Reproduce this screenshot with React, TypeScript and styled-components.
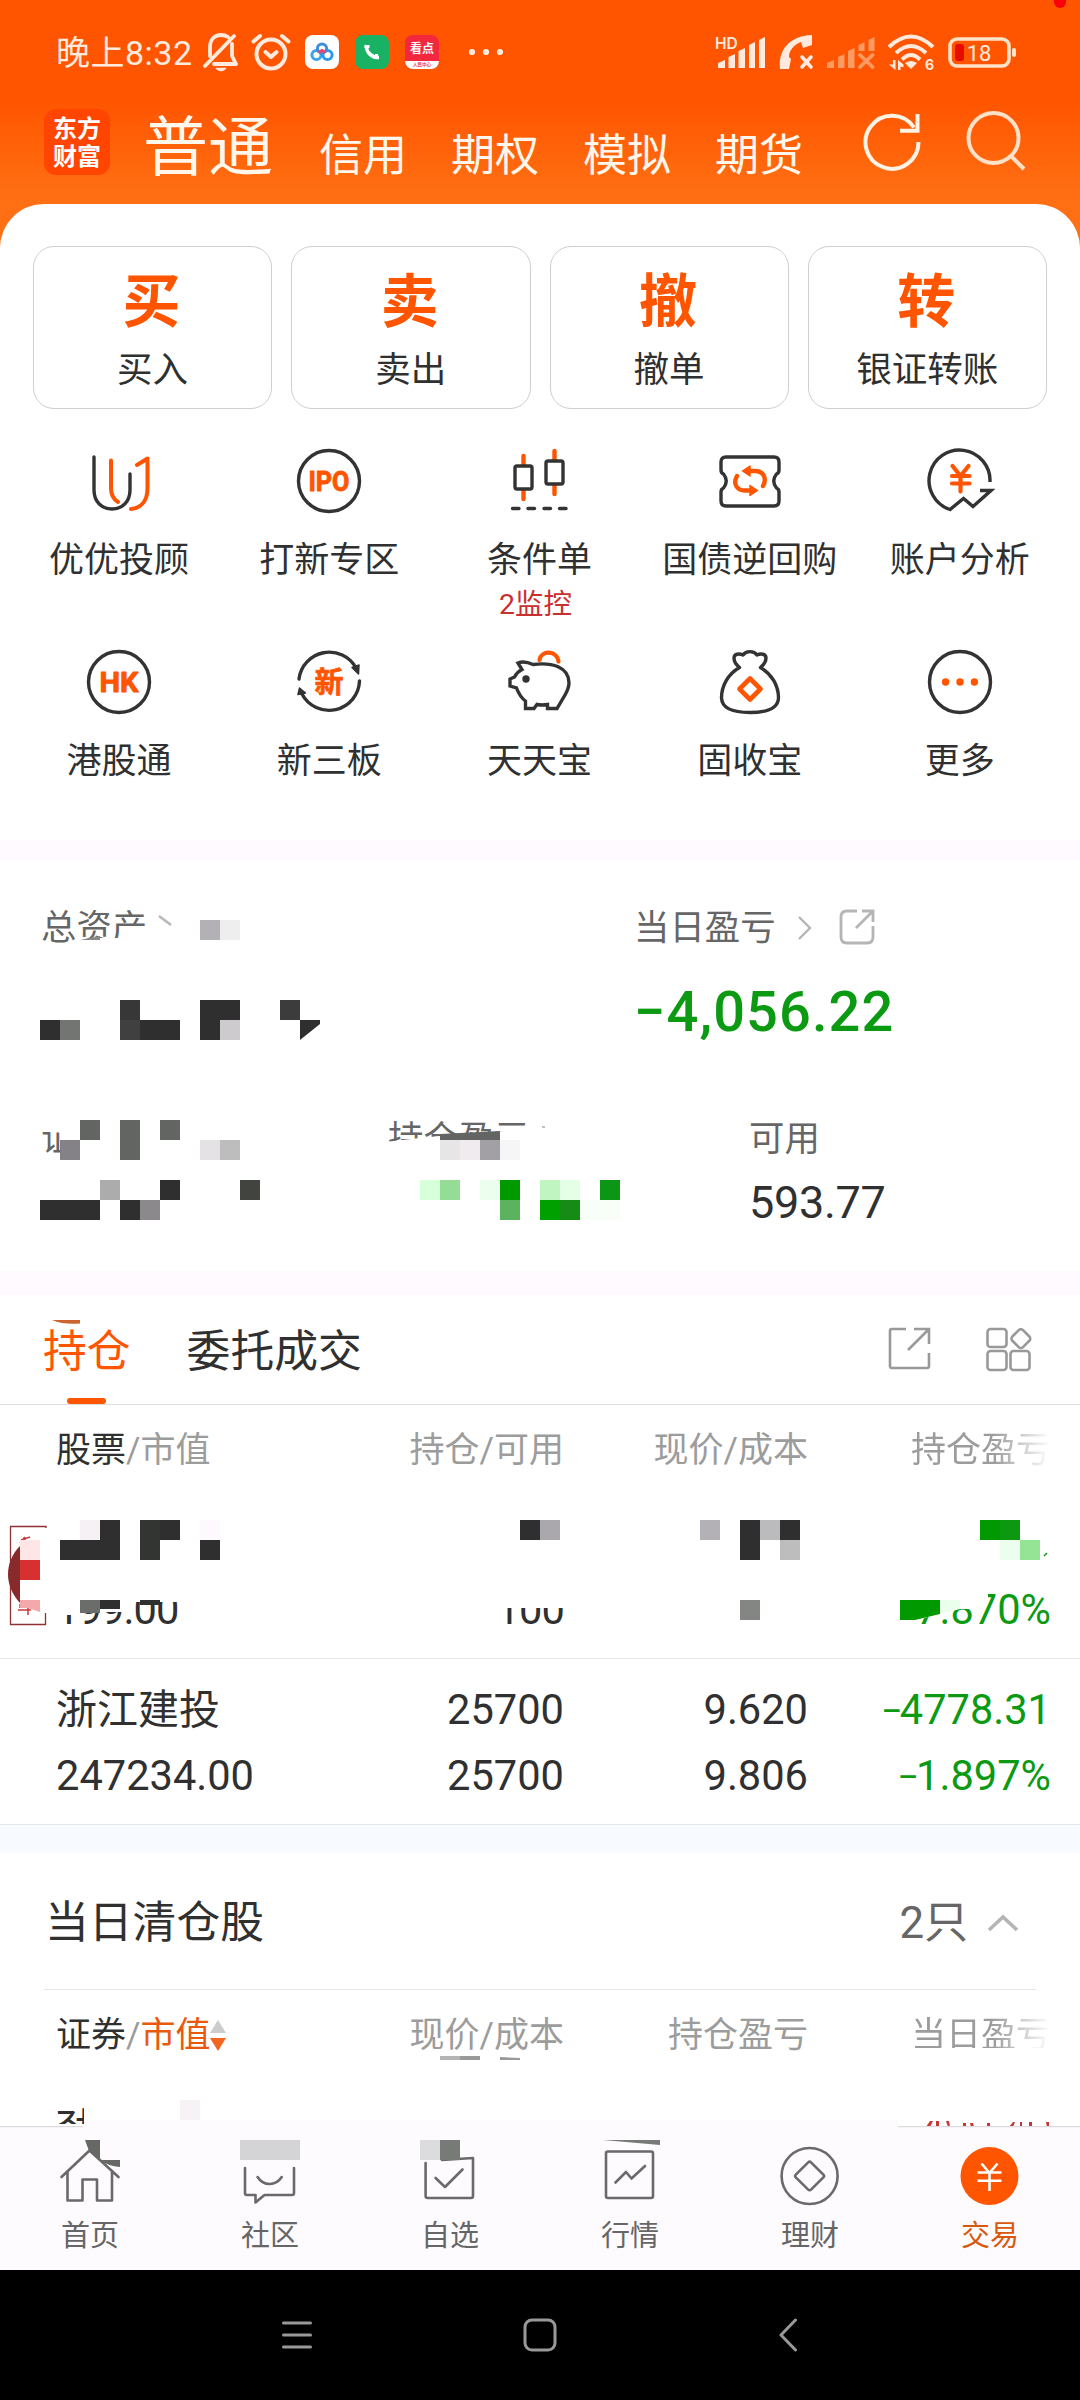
import React from "react";
import styled, { createGlobalStyle, css } from "styled-components";

const ORANGE = "#ff5500";
const INK = "#303030";
const GREEN = "#0b9a12";

const GlobalStyle = createGlobalStyle`
  body { margin: 0; background: #000; }
  * { box-sizing: border-box; }
  svg { display: block; flex: none; }
`;

const Screen = styled.main`
  width: 1080px;
  height: 2400px;
  overflow: hidden;
  display: flex;
  flex-direction: column;
  background: #fff;
  color: ${INK};
  font-family: Roboto, "Noto Sans CJK SC", sans-serif;
  white-space: nowrap;
`;

/* ---------- header ---------- */
const Header = styled.header`
  height: 254px;
  flex: none;
  background: linear-gradient(#ff5500 0, #ff5500 100px, #ff6e12 190px, #ff7014 254px);
`;

const StatusBar = styled.div`
  position: relative;
  height: 104px;
  padding: 0 63px 0 56px;
  display: flex;
  align-items: center;
  justify-content: space-between;
  color: #ffeadd;
`;

const StatusGroup = styled.div<{ $gap: number }>`
  display: flex;
  align-items: center;
  gap: ${(p) => p.$gap}px;
`;

const Clock = styled.span`
  width: 131px;
  padding-top: 2px;
  font-size: 34px;
  line-height: 40px;
  letter-spacing: 0.5px;
`;

const AlertIcons = styled.span`
  display: flex;
  gap: 12px;
  margin-right: -2px;
`;

const MoreDots = styled.svg`
  margin-left: 12px;
`;

const AppTile = styled.span<{ $bg: string }>`
  width: 34px;
  height: 34px;
  border-radius: 8px;
  overflow: hidden;
  background: ${(p) => p.$bg};
  display: flex;
  flex-direction: column;
  align-items: center;
  justify-content: center;
`;

const NewsTile = styled(AppTile)`
  justify-content: space-between;
  color: #fff;
  font: 700 12px/26px "Noto Sans CJK SC", sans-serif;
  small {
    width: 100%;
    height: 8px;
    background: #fff;
    color: #e8334a;
    font-size: 4.5px;
    line-height: 7px;
    text-align: center;
  }
`;

const CameraDot = styled.i`
  position: absolute;
  top: -6px;
  right: 14px;
  width: 12px;
  height: 14px;
  border-radius: 6px;
  background: #fb0007;
`;

const TopTabs = styled.nav`
  height: 100px;
  padding: 0 54px 0 44px;
  display: flex;
  align-items: center;
  color: #fff6ec;
`;

const Logo = styled.div`
  width: 66px;
  height: 66px;
  margin: 0 33px 24px 0;
  padding-top: 4px;
  border-radius: 12px;
  background: #ff4500;
  display: flex;
  flex-direction: column;
  align-items: center;
  color: #fff;
  font: 700 24px/28px "Noto Sans CJK SC", sans-serif;
`;

const ActiveTab = styled.span`
  width: 176px;
  margin-bottom: 12px;
  font-size: 65px;
  line-height: 70px;
`;

const TopTab = styled.span`
  width: 132px;
  padding-top: 4px;
  font-size: 44px;
  line-height: 50px;
`;

const TopIcons = styled.div`
  display: flex;
  gap: 44px;
  margin: 0 0 26px auto;
`;

/* ---------- shortcuts ---------- */
const QuickPanel = styled.section`
  height: 636px;
  flex: none;
  margin-top: -50px;
  padding: 42px 0 0;
  border-radius: 44px 44px 0 0;
  background: #fff;
`;

const Actions = styled.div`
  display: flex;
  gap: 19px;
  padding: 0 33px;
`;

const ActionCard = styled.div`
  flex: 1;
  height: 163px;
  border: 1px solid #cfcfcf;
  border-radius: 21px;
  display: flex;
  flex-direction: column;
  align-items: center;
  strong {
    margin: 22px 2px 0 0;
    color: ${ORANGE};
    font-size: 58px;
    line-height: 66px;
    font-weight: 700;
  }
  span {
    margin-top: 14px;
    font-size: 35.5px;
    line-height: 42px;
  }
`;

const Shortcuts = styled.div`
  margin: 37px 14px 0;
  display: grid;
  grid-template-columns: repeat(5, 210.2px);
  grid-auto-rows: 201px;
`;

const Shortcut = styled.div`
  display: flex;
  flex-direction: column;
  align-items: center;
  font-size: 35px;
  line-height: 40px;
  span { margin-top: 25px; }
  em {
    margin: 10px 0 0 -8px;
    color: #c9302f;
    font-size: 28.5px;
    line-height: 28px;
    font-style: normal;
  }
`;

const Band = styled.div<{ $h: number; $bg: string }>`
  flex: none;
  height: ${(p) => p.$h}px;
  background: ${(p) => p.$bg};
`;

/* ---------- assets ---------- */
const Block = styled.section<{ $h: number }>`
  position: relative;
  flex: none;
  height: ${(p) => p.$h}px;
`;

const Mosaic = styled.svg`
  position: absolute;
  left: 0;
  bottom: 0;
  pointer-events: none;
`;

const AssetTop = styled.div`
  padding: 48px 0 0 41px;
  display: grid;
  grid-template-columns: 593px 1fr;
  height: 259px;
  align-content: start;
`;

const AssetBottom = styled.div`
  padding-left: 41px;
  display: grid;
  grid-template-columns: 347px 361px 1fr;
`;

const Label = styled.div`
  display: flex;
  align-items: center;
  height: 40px;
  color: #666;
  font-size: 35.4px;
  line-height: 40px;
`;

const Chevron = styled.svg`
  margin-left: 21px;
`;

const ShareIcon = styled.svg`
  margin: -3px 0 0 26px;
`;

const DayProfit = styled.div`
  margin-top: 34px;
  color: ${GREEN};
  font-size: 56px;
  line-height: 60px;
  font-weight: 500;
  letter-spacing: 1.1px;
`;

const Available = styled.div`
  margin-top: 19px;
  font-size: 45px;
  line-height: 50px;
  letter-spacing: -0.3px;
`;

/* ---------- holdings ---------- */
const TabBar = styled.div`
  height: 110px;
  padding: 0 48px 0 43px;
  border-bottom: 1px solid #dedede;
  display: flex;
  align-items: flex-start;
`;

const HoldTab = styled.span<{ $active?: boolean }>`
  height: 109px;
  margin-right: 56px;
  padding-top: 31px;
  font-size: 43.8px;
  line-height: 52px;
  display: flex;
  flex-direction: column;
  align-items: center;
  justify-content: space-between;
  ${(p) =>
    p.$active &&
    css`
      color: ${ORANGE};
      &::after {
        content: "";
        width: 39px;
        height: 6px;
        border-radius: 3px;
        background: ${ORANGE};
      }
    `}
`;

const TabTools = styled.div`
  margin: 32px 0 0 auto;
  display: flex;
  gap: 55px;
`;

const columns = css`
  display: grid;
  grid-template-columns: 222px 286px 244px 243px;
  padding: 0 29px 0 56px;
  > * { text-align: right; }
  > :first-child { text-align: left; }
`;

const ColumnHead = styled.div`
  ${columns}
  height: 88px;
  padding-top: 4px;
  align-items: center;
  color: #9c9c9c;
  font-size: 35px;
  line-height: 40px;
  b { font-weight: 400; color: ${INK}; }
  i { font-style: normal; color: #e8590c; }
  > :last-child {
    -webkit-mask-image: linear-gradient(90deg, #000 185px, transparent 243px);
    mask-image: linear-gradient(90deg, #000 185px, transparent 243px);
  }
`;

const SortableHead = styled.div`
  display: flex;
  align-items: center;
`;

const HoldRow = styled.div`
  ${columns}
  height: 166px;
  padding-top: 18px;
  border-bottom: 1px solid #e6e6e6;
  font-size: 41.6px;
  line-height: 66px;
`;

const Cell = styled.div<{ $color?: string; $tight?: boolean }>`
  color: ${(p) => p.$color ?? INK};
  letter-spacing: ${(p) => (p.$tight ? "-0.9px" : "0")};
  div { height: 66px; }
`;

const StockName = styled.div`
  font-size: 41px;
`;

const Minus = styled.span`
  margin-right: -3px;
  font-size: 38px;
`;

/* ---------- cleared ---------- */
const ClearedTitle = styled.div`
  height: 137px;
  margin: 0 44px;
  padding: 4px 17px 0 1px;
  border-bottom: 1px solid #e6e6e6;
  display: flex;
  align-items: center;
  font-size: 43.8px;
  line-height: 50px;
  span { margin-left: auto; margin-right: 19px; color: #666; }
`;

const PeekRow = styled.div`
  height: 46px;
  padding: 31px 0 0 55px;
  overflow: hidden;
  font-size: 41.6px;
  line-height: 42px;
`;

/* ---------- bottom ---------- */
const BottomNav = styled.nav`
  position: relative;
  flex: none;
  height: 144px;
  padding-top: 15px;
  background: #fefbff;
  display: grid;
  grid-template-columns: repeat(6, 180px);
`;

const NavItem = styled.div<{ $active?: boolean }>`
  display: flex;
  flex-direction: column;
  align-items: center;
  gap: 10px;
  color: ${(p) => (p.$active ? "#d9580e" : "#666")};
  font-size: 29px;
  line-height: 30px;
`;

const SystemBar = styled.footer`
  flex: 1;
  background: #000;
  display: grid;
  grid-template-columns: 32px 34px 20px;
  align-items: center;
  column-gap: 216px;
  padding-left: 281px;
  > :nth-child(2) { margin-left: -6px; }
  > :nth-child(3) { margin-left: -1px; }
`;

/* ---------- drawings ---------- */
const Glyph = ({ children, color = "#333", w = 3.4 }: { children: React.ReactNode; color?: string; w?: number }) => (
  <svg width="70" height="70" viewBox="0 0 70 70" fill="none" stroke={color} strokeWidth={w} strokeLinecap="round" strokeLinejoin="round">
    {children}
  </svg>
);

const glyphText = { fill: ORANGE, stroke: ORANGE, strokeWidth: 0.9, textAnchor: "middle" as const, fontWeight: 700 };

const shortcuts: { name: string; note?: string; icon: React.ReactNode }[] = [
  {
    name: "优优投顾",
    icon: (
      <>
        <path d="M10 11V44C10 56 18 63 28 63S46 56 46 44V28" />
        <path d="M27 14.500V42C27 48 29 53 34 56M53 19 63.500 12.500V42C63.500 55 57 62 47 63" stroke={ORANGE} strokeWidth="4" />
      </>
    ),
  },
  {
    name: "打新专区",
    icon: (
      <>
        <circle cx="35" cy="35" r="30.500" />
        <text x="35" y="45" fontFamily="Roboto" fontSize="28" textLength="41" lengthAdjust="spacingAndGlyphs" {...glyphText}>IPO</text>
      </>
    ),
  },
  {
    name: "条件单",
    note: "2监控",
    icon: (
      <>
        <path d="M19.500 10V19M19.500 44V53M50.500 5V14M50.500 39V48" stroke={ORANGE} strokeWidth="4.400" />
        <rect x="11" y="20" width="17" height="23" rx="2" />
        <rect x="42" y="15" width="17" height="23" rx="2" />
        <path d="M8.500 62.500H15M24 62.500H30.500M40 62.500H46.500M55.500 62.500H62" />
      </>
    ),
  },
  {
    name: "国债逆回购",
    icon: (
      <>
        <path d="M11 11H59Q64 11 64 16V24Q64 27 61.500 28Q56 35 61.500 42Q64 43 64 46V55Q64 60 59 60H11Q6 60 6 55V46Q6 43 8.500 42Q14 35 8.500 28Q6 27 6 24V16Q6 11 11 11Z" />
        <path d="M33 25H40C49 25 52 33 48 40M37 44.500H30C21 44.500 18 37 22 30" stroke={ORANGE} strokeWidth="4.400" />
        <path d="M27.500 25 35 20V30ZM42.500 44.500 35 39.500V49.500Z" fill={ORANGE} stroke={ORANGE} strokeWidth="1.500" />
      </>
    ),
  },
  {
    name: "账户分析",
    icon: (
      <>
        <path d="M65 36A30.500 30.500 0 1 0 25 63.500L38.500 52.500 48 60.500 66 44.500H55" strokeLinecap="butt" strokeLinejoin="miter" />
        <path d="M27.500 20 35.500 30 43.500 20M27 30H44.500M27 37.500H44.500M35.500 30V45.500" stroke={ORANGE} strokeWidth="4.200" />
      </>
    ),
  },
  {
    name: "港股通",
    icon: (
      <>
        <circle cx="35" cy="35" r="30.500" />
        <text x="35" y="45" fontFamily="Roboto" fontSize="28" textLength="39" lengthAdjust="spacingAndGlyphs" {...glyphText}>HK</text>
      </>
    ),
  },
  {
    name: "新三板",
    icon: (
      <>
        <path d="M5 32A30.500 30.500 0 0 1 62 21M65.500 34A30.500 30.500 0 0 1 8 47" />
        <path d="M58 20.500 65 18 64.500 27ZM4 47.500 5.500 41 11.500 46Z" fill="#333" strokeWidth="1.500" />
        <text x="35" y="45.500" fontFamily="Noto Sans CJK SC" fontSize="29" {...glyphText} strokeWidth={0.7}>新</text>
      </>
    ),
  },
  {
    name: "天天宝",
    icon: (
      <>
        <path d="M14 16Q20 13.500 29 17.500C48 15 65 20 65 36Q65 41 61 48L53 61.500H43.500V57.500Q38 58.500 33 57.500L30 61.500H21.500V54Q16 50 12.500 41L6 39V32L10.500 30Q13 25 18 22.500Z" strokeLinejoin="miter" />
        <circle cx="22" cy="32" r="2" fill="#333" />
        <path d="M35.500 13C37 3 53 3 54.500 14.500" stroke={ORANGE} strokeWidth="4.200" />
      </>
    ),
  },
  {
    name: "固收宝",
    icon: (
      <>
        <path d="M24.500 20.500C13 27 6.500 39 6.500 51C7 62 20 65.500 35 65.500S63 62 63.500 51C63.500 39 57 27 45.500 20.500Q51 16 51 11C51 7 46 6 42 8C39 3.500 31 3.500 28 8C24 6 19 7 19 11Q19 16 24.500 20.500" />
        <path d="M35 31.500 45.500 42 35 52.500 24.500 42Z" stroke={ORANGE} strokeWidth="4.600" />
      </>
    ),
  },
  {
    name: "更多",
    icon: (
      <>
        <circle cx="35" cy="35" r="30.500" />
        <g fill={ORANGE} stroke="none">
          <circle cx="20.600" cy="35" r="3.700" />
          <circle cx="35" cy="35" r="3.700" />
          <circle cx="49.400" cy="35" r="3.700" />
        </g>
      </>
    ),
  },
];

const navItems: { name: string; active?: boolean; icon: React.ReactNode }[] = [
  { name: "首页", icon: <path d="M6.500 36 34.500 9.500 63.500 36M12.500 31V59.500H27.500V38.500H42V59.500H57V31" /> },
  { name: "社区", icon: <path d="M10 27V52Q10 54 12 54H20.500V61.500L29.500 54H57Q59 54 59 52V27M22.600 36Q27 43 34.600 43T46.700 36" /> },
  { name: "自选", icon: <path d="M10.600 22V55Q10.600 57 12.600 57H56Q58 57 58 55V17L27 19M20.600 37 30 46 47.500 28.500" /> },
  {
    name: "行情",
    icon: (
      <>
        <rect x="11" y="10.500" width="47" height="46.500" rx="2" />
        <path d="M20.500 41.500 31 31 36.500 37.500 50 25" />
      </>
    ),
  },
  {
    name: "理财",
    icon: (
      <>
        <circle cx="34.600" cy="35" r="28" />
        <path d="M33.200 21.400Q34.600 20 36 21.400L48.400 33.600Q49.800 35 48.400 36.400L36 48.600Q34.600 50 33.200 48.600L20.800 36.400Q19.400 35 20.800 33.600Z" />
      </>
    ),
  },
  {
    name: "交易",
    active: true,
    icon: (
      <>
        <circle cx="34.500" cy="35" r="29" fill={ORANGE} stroke="none" />
        <path d="M26.500 22.500 34.500 32 42.500 22.500M22.500 31.500H46.500M22.500 39.800H46.500M34.500 32V50" stroke="#fff" strokeWidth="2.600" strokeLinecap="butt" />
      </>
    ),
  },
];

type Tile = [number, number, string, number?, number?];
const Tiles = ({ list }: { list: Tile[] }) => (
  <g shapeRendering="crispEdges">
    {list.map(([x, y, fill, w = 20, h = 20], i) => (
      <rect key={i} x={x} y={y} width={w} height={h} fill={fill} />
    ))}
  </g>
);

const assetTiles: Tile[] = [
  [78, 940, "#fff", 22, 10], [100, 938, "#fff", 60, 12],
  [200, 920, "#b3b1b5"], [220, 920, "#eee"],
  [120, 1000, "#373737"], [200, 1000, "#2f2f2f", 40], [280, 1000, "#3b3c3b"],
  [40, 1020, "#2f2f2f"], [60, 1020, "#737573"], [120, 1020, "#404040"], [140, 1020, "#2f2f2f", 40], [200, 1020, "#2f2f2f"], [220, 1020, "#cdcbce"],
  [40, 1115, "#fff", 150, 17], [63, 1115, "#fff", 130, 45], [40, 1153, "#fff", 40, 9],
  [80, 1120, "#636562"], [120, 1120, "#636562", 20, 40], [160, 1120, "#636562"],
  [60, 1140, "#848286"], [200, 1140, "#e5e2e6"], [220, 1140, "#bdbdbd"],
  [100, 1180, "#acacac"], [160, 1180, "#2f2f2f"], [240, 1180, "#424440"],
  [40, 1200, "#2f2f2f", 60], [120, 1200, "#2f2f2f"], [140, 1200, "#8b898c"],
];
const assetTilesRight: Tile[] = [
  [440, 1140, "#e6e6e6"], [460, 1140, "#f0ebef"], [480, 1140, "#a2a0a4"], [500, 1140, "#f6f6f6"],
  [420, 1180, "#d7ffd9"], [440, 1180, "#95dd96"], [480, 1180, "#ecffee"], [500, 1180, "#009900"],
  [540, 1180, "#c0f4c1"], [560, 1180, "#e5ffe7"], [600, 1180, "#0b9715"],
  [500, 1200, "#5cb35f"], [540, 1200, "#00a000"], [560, 1200, "#168b16"], [580, 1200, "#f8fff8", 40],
];
const holdTiles: Tile[] = [
  [80, 1520, "#f5f1f5"], [100, 1520, "#2f2f2f"], [140, 1520, "#323531"], [160, 1520, "#2f2f2f"], [200, 1520, "#fdf9ff"],
  [60, 1540, "#2f2f2f", 60], [140, 1540, "#323531"], [200, 1540, "#2f2f2f"],
  [55, 1588, "#fff", 21, 27], [76, 1588, "#fff", 50, 24], [120, 1588, "#fff", 65, 14],
  [80, 1600, "#6b6d6a", 20, 13], [100, 1600, "#2f2f2f", 20, 9], [140, 1600, "#2f2f2f", 20, 5],
  [495, 1588, "#fff", 75, 20], [520, 1520, "#2f2f2f"], [540, 1520, "#aaa8ac"],
  [700, 1520, "#b3b1b5"], [740, 1520, "#2f2f2f", 20, 40], [760, 1520, "#bbbabc"], [780, 1520, "#2f2f2f"], [780, 1540, "#bdbdbd"], [740, 1600, "#848684"],
  [980, 1520, "#009900"], [1000, 1520, "#0c9810"], [1000, 1540, "#ecffee"], [1020, 1540, "#95e496"],
  [880, 1588, "#fff", 92, 21], [968, 1588, "#fff", 20, 16],
];

const stock = {
  name: "浙江建投", value: "247234.00", held: "25700", free: "25700", price: "9.620", cost: "9.806", profit: "4778.31", rate: "1.897%",
};

export default function App() {
  return (
    <Screen>
      <GlobalStyle />
      <Header>
        <StatusBar>
          <StatusGroup $gap={16}>
            <Clock>晚上8:32</Clock>
            <AlertIcons>
              <svg width="36" height="40" viewBox="0 0 36 40" fill="none" stroke="#ffeadd" strokeWidth="3.800" strokeLinecap="round" strokeLinejoin="round">
                <path d="M7 24V15C7 7 12 3 18 3Q22 3 25 5M29 12V24L33 32H11M2 34 31 4" />
                <path d="M13.500 36.500H22.500Q18 40.500 13.500 36.500Z" fill="#ffeadd" strokeWidth="1.500" />
              </svg>
              <svg width="40" height="40" viewBox="0 0 40 40" fill="none" stroke="#ffeadd" strokeWidth="4" strokeLinecap="round" strokeLinejoin="round">
                <circle cx="20" cy="22" r="14.500" />
                <path d="M14.500 20 20 25 25.500 20M2.500 9.500 9 4M37.500 9.500 31 4" />
              </svg>
            </AlertIcons>
            <AppTile $bg="#fff">
              <svg width="24" height="20" viewBox="0 0 24 20" fill="none" strokeWidth="3">
                <circle cx="6.500" cy="13" r="4.600" stroke="#3aa3ea" />
                <circle cx="17.500" cy="13" r="4.600" stroke="#2b9be8" />
                <circle cx="12" cy="6.500" r="4.600" stroke="#3c8fdc" />
                <path d="M8.500 10.500 12 8.500 15.500 10.500" stroke="#e8486a" />
              </svg>
            </AppTile>
            <AppTile $bg="#19b264">
              <svg width="18" height="18" viewBox="0 0 18 18" fill="none" stroke="#fff" strokeWidth="3.600">
                <path d="M3.500 2C3 9 8 14.500 16 14.500" />
                <path d="M1.500 3.500H6.500M13.500 11V16" strokeWidth="3" />
              </svg>
            </AppTile>
            <NewsTile $bg="#f3283f">看点<small>人民中心</small></NewsTile>
            <MoreDots width="36" height="8" viewBox="0 0 36 8" fill="#ffeadd">
              <circle cx="5" cy="4" r="3.100" /><circle cx="19" cy="4" r="3.100" /><circle cx="33" cy="4" r="3.100" />
            </MoreDots>
          </StatusGroup>
          <StatusGroup $gap={13}>
            <svg width="51" height="36" viewBox="0 0 51 36" fill="#ffeadd">
              <text x="0" y="15" fontFamily="Inter" fontWeight="600" fontSize="15.500">HD</text>
              <path d="M3 34V29L10 26V34ZM13.500 34V23L20 20V34ZM23.500 34V17L30 14V34ZM34 34V11L40 8V34ZM44 34V6L50 3V34Z" />
            </svg>
            <svg width="35" height="36" viewBox="0 0 35 36" fill="#ffeadd" stroke="#ffeadd" strokeLinecap="round">
              <path d="M1 35C-1 15 11 2 33 1V11L24 14 22 8C14 11 10 17 10 23L12 25 10 35Z" stroke="none" />
              <path d="M23 23 32 33M32 23 23 33" fill="none" strokeWidth="3.600" />
            </svg>
            <svg width="48" height="34" viewBox="0 0 48 34" fill="#ff9a62">
              <path d="M0 33V28L7 25V33ZM11 33V22L17.500 19V33ZM21 33V16L27.500 13V33ZM31.500 16V10L37.500 7V16ZM41.500 16V5L47.500 2V16Z" />
              <path d="M33 20 45.500 32M45.500 20 33 32" stroke="#ff9a62" strokeWidth="3.800" strokeLinecap="round" />
            </svg>
            <svg width="47" height="37" viewBox="0 0 47 37" fill="none" stroke="#ffeadd" strokeWidth="4">
              <path d="M1 13Q23 -8 45 13M8 19Q23 5 38 19M14 25.500Q23 16.500 32 25.500" />
              <path d="M17 29Q23 25 29 29L23 35ZM7.500 26V36L1 30.500H5V26ZM10 36V26L15.500 30.500V33H12.500V36Z" fill="#ffeadd" stroke="none" />
              <text x="37" y="35.500" fontFamily="Inter" fontWeight="700" fontSize="14" fill="#ffeadd" stroke="none">6</text>
            </svg>
            <svg width="69" height="31" viewBox="0 0 69 31">
              <rect x="2" y="2" width="59" height="27" rx="7" fill="none" stroke="#ffe3c8" strokeWidth="3.600" />
              <rect x="7" y="7" width="9" height="17" rx="3" fill="#e60c00" />
              <rect x="64" y="11" width="4" height="9" rx="2" fill="#ffe3c8" />
              <text x="31" y="23.500" fontFamily="Roboto" fontSize="22" fill="#ffeadd" textAnchor="middle">18</text>
            </svg>
          </StatusGroup>
          <CameraDot />
        </StatusBar>
        <TopTabs>
          <Logo><span>东方</span><span>财富</span></Logo>
          <ActiveTab>普通</ActiveTab>
          {["信用", "期权", "模拟", "期货"].map((t) => <TopTab key={t}>{t}</TopTab>)}
          <TopIcons>
            <svg width="60" height="60" viewBox="0 0 60 60" fill="none" stroke="#fff3e6" strokeWidth="4">
              <path d="M56.500 31A26.500 26.500 0 1 1 52 16.500" />
              <path d="M38 19.800H55.500V3" />
            </svg>
            <svg width="60" height="60" viewBox="0 0 60 60" fill="none" stroke="#ffe0c8" strokeWidth="4">
              <circle cx="27.500" cy="27" r="25" />
              <path d="M45 45 58 58" />
            </svg>
          </TopIcons>
        </TopTabs>
      </Header>

      <QuickPanel>
        <Actions>
          {[["买", "买入"], ["卖", "卖出"], ["撤", "撤单"], ["转", "银证转账"]].map(([mark, name]) => (
            <ActionCard key={mark}><strong>{mark}</strong><span>{name}</span></ActionCard>
          ))}
        </Actions>
        <Shortcuts>
          {shortcuts.map((s) => (
            <Shortcut key={s.name}>
              <Glyph>{s.icon}</Glyph>
              <span>{s.name}</span>
              {s.note && <em>{s.note}</em>}
            </Shortcut>
          ))}
        </Shortcuts>
      </QuickPanel>
      <Band $h={20} $bg="#fefaff" />

      <Block $h={411}>
        <AssetTop>
          <Label>总资产</Label>
          <div>
            <Label>
              当日盈亏
              <Chevron width="16" height="26" viewBox="0 0 16 26" fill="none" stroke="#b5b5b5" strokeWidth="2.400"><path d="M2 2 13 13 2 24" /></Chevron>
              <ShareIcon width="36" height="36" viewBox="0 0 36 36" fill="none" stroke="#b5b5b5" strokeWidth="2.800">
                <path d="M18 2H8Q2 2 2 8V28Q2 34 8 34H28Q34 34 34 28V17M23 2H34V13M33 3 17 19" />
              </ShareIcon>
            </Label>
            <DayProfit>−4,056.22</DayProfit>
          </div>
        </AssetTop>
        <AssetBottom>
          <Label>证券市值</Label>
          <Label>持仓盈亏</Label>
          <div>
            <Label>可用</Label>
            <Available>593.77</Available>
          </div>
        </AssetBottom>
        <Mosaic width="1080" height="411" viewBox="0 860 1080 411">
          <Tiles list={assetTiles} />
          <path d="M80 940 100 936V940Z" fill="#888" />
          <path d="M159 916 171 925" stroke="#b8b8b8" strokeWidth="2.600" />
          <path d="M300 1020H320V1024L300 1040Z" fill="#2f2f2f" />
          <path d="M385 1142 420 1138 440 1136 530 1129V1162H385Z" fill="#fff" />
          <path d="M440 1134 500 1131V1140H440Z" fill="#636562" />
          <Tiles list={assetTilesRight} />
          <path d="M542 1127H545" stroke="#aaa" strokeWidth="1.500" />
        </Mosaic>
      </Block>
      <Band $h={24} $bg="#fefaff" />

      <Block $h={530}>
        <TabBar>
          <HoldTab $active>持仓</HoldTab>
          <HoldTab>委托成交</HoldTab>
          <TabTools>
            <svg width="43" height="43" viewBox="0 0 43 43" fill="none" stroke="#999" strokeWidth="2.600">
              <path d="M18 2H4Q2 2 2 4V39Q2 41 4 41H39Q41 41 41 39V26M26 2H41V17M40 3 20 23" />
            </svg>
            <svg width="46" height="46" viewBox="0 0 46 46" fill="none" stroke="#999" strokeWidth="2.600">
              <rect x="1.500" y="2" width="19" height="18" rx="3" />
              <rect x="1.500" y="24" width="19" height="19" rx="3" />
              <rect x="24.500" y="24" width="19" height="19" rx="3" />
              <rect x="27" y="4" width="15" height="15" rx="3" transform="rotate(45 34.500 12)" />
            </svg>
          </TabTools>
        </TabBar>
        <ColumnHead>
          <div><b>股票</b>/市值</div>
          <div>持仓/可用</div>
          <div>现价/成本</div>
          <div>持仓盈亏</div>
        </ColumnHead>
        <HoldRow>
          <Cell $tight><div />199.00</Cell>
          <Cell $tight><div />100</Cell>
          <Cell />
          <Cell $color={GREEN}><div /><Minus>−</Minus>7.870%</Cell>
        </HoldRow>
        <HoldRow>
          <Cell><StockName>{stock.name}</StockName>{stock.value}</Cell>
          <Cell><div>{stock.held}</div>{stock.free}</Cell>
          <Cell><div>{stock.price}</div>{stock.cost}</Cell>
          <Cell $color={GREEN}><div><Minus>−</Minus>{stock.profit}</div><Minus>−</Minus>{stock.rate}</Cell>
        </HoldRow>
        <Mosaic width="1080" height="530" viewBox="0 1295 1080 530">
          <path d="M52 1320H80V1323.500Q64 1325 52 1320Z" fill="#cc6430" />
          <Tiles list={holdTiles} />
          <path d="M880 1600H940V1614L920 1619V1626H880Z" fill="#fff" />
          <path d="M900 1600H940V1614L915 1620H900Z" fill="#009900" />
          <path d="M940 1600H960V1609L940 1614Z" fill="#ebffed" />
          <path d="M1044 1556 1047 1553" stroke={GREEN} strokeWidth="1.500" />
          <path d="M46 1528V1526.500H10.500V1624.500H45.500V1613" fill="none" stroke="#8f3034" strokeWidth="1.300" />
          <path d="M20 1546C4 1562 4 1586 20 1603Z" fill="#882a2b" />
          <path d="M20 1543 25 1537M21 1540 30 1537M24 1537 26 1542M18 1610H31M28 1606V1615M20 1604V1608" stroke="#c5383b" strokeWidth="1.500" fill="none" />
          <Tiles list={[[20, 1540, "#ffe6e6"], [20, 1560, "#d63031"], [20, 1600, "#f5a8ac", 20, 8]]} />
          <path d="M28 1608H40V1612Z" fill="#f5a8ac" />
        </Mosaic>
      </Block>
      <Band $h={28} $bg="#f7faff" />

      <Block $h={273}>
        <ClearedTitle>
          当日清仓股
          <span>2只</span>
          <svg width="32" height="18" viewBox="0 0 32 18" fill="none" stroke="#b5b5b5" strokeWidth="3.600"><path d="M2 16 16 3 30 16" /></svg>
        </ClearedTitle>
        <ColumnHead>
          <SortableHead>
            <b>证券</b>/<i>市值</i>
            <svg width="16" height="32" viewBox="0 0 16 32"><path d="M8 0 16 13H0Z" fill="#ccc" /><path d="M0 18H16L8 31Z" fill="#f26522" /></svg>
          </SortableHead>
          <div>现价/成本</div>
          <div>持仓盈亏</div>
          <div>当日盈亏</div>
        </ColumnHead>
        <PeekRow>劲</PeekRow>
        <Mosaic width="1080" height="273" viewBox="0 1853 1080 273">
          <Tiles list={[[440, 2056, "#b5b3b6", 20, 4], [460, 2056, "#999", 20, 4], [180, 2100, "#f6f2f6"], [910, 2048, "#fff", 145, 8], [84, 2105, "#fff", 20, 21], [84, 2120, "#fefbff", 814, 7]]} />
          <path d="M500 2057 520 2058V2060H500Z" fill="#999" />
          <path d="M926 2127 930 2121H933L930 2127ZM936 2121H939V2127H936ZM946 2121H949L950 2127H948ZM963 2123H966V2127H963ZM970 2123H973L974 2127H971ZM987 2123H990V2127H987ZM1009 2127 1013 2122H1015L1013 2127ZM1020 2122H1022V2127H1020ZM1029 2122H1032V2127H1029ZM1046 2122H1049V2127H1047Z" fill="#c93434" />
        </Mosaic>
      </Block>

      <BottomNav>
        {navItems.map((n) => (
          <NavItem key={n.name} $active={n.active}>
            <Glyph color="#6a6a6a" w={2.6}>{n.icon}</Glyph>
            {n.name}
          </NavItem>
        ))}
        <Mosaic width="1080" height="144" viewBox="0 2126 1080 144">
          <path d="M0 2126.500H83M898 2126.500H1080" stroke="#dcdcdf" strokeWidth="1.500" />
          <path d="M85 2140H100V2160L89 2151ZM100 2160H120V2167Q108 2166 100 2160Z" fill="#666863" />
          <Tiles list={[[240, 2140, "#d4d3d5", 60], [420, 2140, "#dcdbde"], [440, 2140, "#787a77"]]} />
          <path d="M603 2140H660V2145Z" fill="#787a77" />
        </Mosaic>
      </BottomNav>

      <SystemBar>
        <svg width="32" height="32" viewBox="0 0 32 32" stroke="#999" strokeWidth="3" strokeLinecap="round"><path d="M2.500 4H29.500M2.500 16H29.500M2.500 28H29.500" /></svg>
        <svg width="34" height="34" viewBox="0 0 34 34" fill="none" stroke="#999" strokeWidth="3"><rect x="2" y="2" width="30" height="30" rx="7" /></svg>
        <svg width="20" height="34" viewBox="0 0 20 34" fill="none" stroke="#999" strokeWidth="3" strokeLinecap="round" strokeLinejoin="round"><path d="M17.500 2 3 17 17.500 32" /></svg>
      </SystemBar>
    </Screen>
  );
}
